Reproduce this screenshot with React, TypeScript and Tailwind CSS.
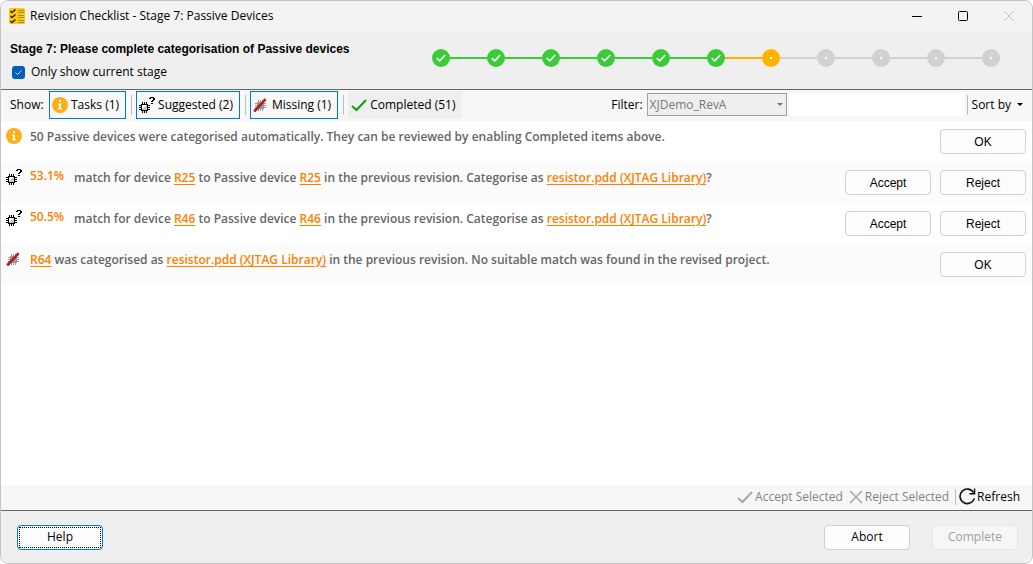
import React from 'react';

const CheckMark = ({ color, width = 2 }) => (
  <svg width="16" height="16" viewBox="0 0 16 16" fill="none" className="shrink-0" aria-hidden="true">
    <path d="M1 9 L5.5 13 L15 3" stroke={color} strokeWidth={width} />
  </svg>
);

const AppIcon = () => (
  <svg width="16" height="16" viewBox="0 0 16 16" fill="none" className="shrink-0" aria-hidden="true">
    <rect width="16" height="16" rx="1.5" fill="#ffc800" />
    <path d="M9 2.5h6M9 4.5h6M9 7.5h6M9 9.5h6M9 12.5h6M9 14.5h6" stroke="#a08c50" />
    <path d="M1.5 3 L3 4.5 L6.5 1.5M1.5 8 L3 9.5 L6.5 6.5M1.5 13 L3 14.5 L6.5 11.5" stroke="#222" strokeWidth="1.4" />
  </svg>
);

const InfoIcon = () => (
  <svg width="16" height="16" viewBox="0 0 16 16" className="shrink-0" aria-hidden="true">
    <circle cx="8" cy="8" r="8" fill="#fcaf17" />
    <path d="M7 3h2v2H7zM6 6.5h3V11h1v1.2H6V11h1V7.7H6z" fill="#fff" />
  </svg>
);

const ChipIcon = () => (
  <svg width="16" height="16" viewBox="0 0 16 16" shapeRendering="crispEdges" className="shrink-0" aria-hidden="true">
    <path d="M3 5h1v11H3zM5 5h1v11H5zM7 5h1v11H7zM0 8h11v1H0zM0 10h11v1H0zM0 12h11v1H0zM2 7h7v7H2z" fill="#000" />
    <path d="M3 8h5v5H3z" fill="#fff" />
    <path d="M7 8h1v5H3v-1h1v-1h1v-1h1V9h1z" fill="#c4c4c4" />
    <path d="M11 0h4v1h-4zM10 1h2v1h-2zM14 1h2v2h-2zM13 3h2v1h-2zM12 4h2v1h-2zM12 6h2v1h-2z" fill="#000" />
  </svg>
);

const MissingIcon = () => (
  <svg width="16" height="16" viewBox="0 0 16 16" className="shrink-0" aria-hidden="true">
    <path
      d="M5 3h1v11H5zM7 3h1v11H7zM9 3h1v11H9zM2 6h11v1H2zM2 8h11v1H2zM2 10h11v1H2zM4 5h7v7H4z"
      fill="#999"
      shapeRendering="crispEdges"
    />
    <path d="M1.5 14.5 L12.5 2.5" stroke="#333" strokeWidth="2" />
    <path d="M1 14 L12.5 2" stroke="#e01010" strokeWidth="2" />
  </svg>
);

const RefreshIcon = () => (
  <svg width="17" height="17" viewBox="0 0 18 18" fill="none" className="shrink-0" aria-hidden="true">
    <path d="M16.2 11 A7.7 7.7 0 1 1 15.5 5" stroke="#111" strokeWidth="1.7" />
    <path d="M16.5 0.5 V6 H11" stroke="#111" strokeWidth="1.5" />
  </svg>
);

const Caret = ({ className = '' }) => (
  <svg width="6" height="3" viewBox="0 0 6 3" className={className} aria-hidden="true">
    <path d="M0 0h6L3 3z" fill="currentColor" />
  </svg>
);

const Separator = () => <div className="w-px h-5 bg-[#bdbdbd]" />;

const steps = ['done', 'done', 'done', 'done', 'done', 'done', 'current', 'todo', 'todo', 'todo', 'todo'];

const stepColors = {
  done: 'bg-[#3bcb38]',
  current: 'bg-[#ffb300]',
  todo: 'bg-[#d0d1d3]',
};

const Stepper = () => (
  <ol className="flex items-center">
    {steps.map((step, i) => (
      <li key={i} className="flex items-center">
        {i > 0 && <span className={`w-[37px] h-[2px] ${stepColors[step]}`} />}
        <span className={`w-[18px] h-[18px] rounded-full flex items-center justify-center ${stepColors[step]}`}>
          {step === 'done' ? (
            <svg width="10" height="8" viewBox="0 0 10 8" fill="none" aria-hidden="true">
              <path d="M0.7 4 L3.7 6.8 L9.2 1" stroke="#fff" strokeWidth="1.6" />
            </svg>
          ) : (
            <span className="w-[2px] h-[2px] bg-white" />
          )}
        </span>
      </li>
    ))}
  </ol>
);

const FilterToggle = ({ icon, label, active = true }) => (
  <button
    type="button"
    aria-pressed={active}
    className={`h-7 mr-px flex items-center gap-[3px] pl-[2px] pr-[6px] border ${
      active ? 'border-[#0078d7] bg-[#f7f7f7]' : 'border-[#efefef] bg-[#efefef]'
    }`}
  >
    {icon}
    {label}
  </button>
);

const buttonStyles = {
  normal: 'border-[#d0d0d0] bg-[#fdfdfd]',
  focused: 'border-[#0078d7] bg-[#fdfdfd] p-px',
  disabled: 'border-[#e6e6e6] bg-[#f6f6f6] text-[#a0a0a0]',
};

const PushButton = ({ children, variant = 'normal' }) => (
  <button
    type="button"
    disabled={variant === 'disabled'}
    className={`w-[86px] h-[25px] shrink-0 rounded border ${buttonStyles[variant]}`}
  >
    {variant === 'focused' ? (
      <span className="flex h-full items-center justify-center border border-dotted border-black">{children}</span>
    ) : (
      children
    )}
  </button>
);

const ItemLink = ({ children }) => (
  <a href="#" className="text-[#ff8000] underline underline-offset-2">
    {children}
  </a>
);

const Item = ({ icon, score = '', actions, children }) => (
  <li className="h-[41px] flex items-start px-[5px] pt-2 even:bg-[#fbfbfb]">
    <div className="h-[14px] flex items-center">{icon}</div>
    {score && <span className="w-9 ml-2 leading-3 font-semibold text-[#ff8000]">{score}</span>}
    <p className="flex-1 ml-2 leading-4 font-semibold text-[#666]">{children}</p>
    <div className="flex gap-[9px] pr-px font-['Liberation_Sans']">
      {actions.map((action) => (
        <PushButton key={action}>{action}</PushButton>
      ))}
    </div>
  </li>
);

const App = () => (
  <div className="h-screen flex flex-col overflow-hidden rounded-lg border border-[#c4c4c4] bg-white font-['Open_Sans',sans-serif] text-[12px] leading-4 text-black">
    {/* Title bar */}
    <div className="h-[30px] shrink-0 flex items-center bg-[#f3f3f3] pl-2">
      <AppIcon />
      <h1 className="flex-1 ml-[5px]">Revision Checklist - Stage 7: Passive Devices</h1>
      <div className="flex">
        <button type="button" aria-label="Minimize" className="w-[46px] h-[30px] flex items-center justify-center">
          <svg width="10" height="10" viewBox="0 0 10 10" fill="none"><path d="M0 5.5h10" stroke="#000" /></svg>
        </button>
        <button type="button" aria-label="Maximize" className="w-[46px] h-[30px] flex items-center justify-center">
          <svg width="10" height="10" viewBox="0 0 10 10" fill="none"><rect x="0.5" y="0.5" width="9" height="9" rx="1" stroke="#000" /></svg>
        </button>
        <button type="button" aria-label="Close" disabled className="w-[46px] h-[30px] flex items-center justify-center">
          <svg width="10" height="10" viewBox="0 0 10 10" fill="none"><path d="M0 0l10 10M10 0L0 10" stroke="#c0c0c0" /></svg>
        </button>
      </div>
    </div>

    {/* Stage header */}
    <div className="h-[59px] shrink-0 flex justify-between bg-[#efefef] border-b border-[#666] pl-[9px] pr-8">
      <div className="pt-[10px]">
        <h2 className="font-['Liberation_Sans'] font-bold">Stage 7: Please complete categorisation of Passive devices</h2>
        <label className="mt-[7px] pl-[2px] flex items-center gap-[6px]">
          <span className="relative w-[13px] h-[13px]">
            <input type="checkbox" defaultChecked className="block appearance-none w-[13px] h-[13px] rounded-[3px] bg-[#005fb8]" />
            <svg width="13" height="13" viewBox="0 0 13 13" fill="none" className="absolute inset-0 pointer-events-none">
              <path d="M3.5 6.5 L5.5 8.5 L9.5 4.5" stroke="#cfe3f5" />
            </svg>
          </span>
          Only show current stage
        </label>
      </div>
      <div className="pt-[18px]">
        <Stepper />
      </div>
    </div>

    {/* Filter bar */}
    <div className="h-[31px] shrink-0 flex items-center bg-[#f7f7f7] px-[9px] pb-[2px]">
      <span className="w-[39px]">Show:</span>
      <div className="flex items-center gap-1">
        <FilterToggle icon={<InfoIcon />} label="Tasks (1)" />
        <Separator />
        <FilterToggle icon={<ChipIcon />} label="Suggested (2)" />
        <Separator />
        <FilterToggle icon={<MissingIcon />} label="Missing (1)" />
        <Separator />
        <FilterToggle icon={<CheckMark color="#10a010" />} label="Completed (51)" active={false} />
      </div>
      <div className="ml-auto flex items-center">
        <label htmlFor="filter" className="mr-1">Filter:</label>
        <div className="relative w-[140px] text-[#777]">
          <select
            id="filter"
            disabled
            className="block appearance-none w-full h-[23px] pl-[2px] border border-[#a0a0a0] bg-[#efefef] opacity-100"
          >
            <option>XJDemo_RevA</option>
          </select>
          <Caret className="absolute right-1 top-[10px] pointer-events-none" />
        </div>
        <input type="text" aria-label="Filter text" className="w-[175px] h-[23px] ml-[2px] mr-[3px] bg-white" />
        <Separator />
        <button type="button" className="ml-1 flex items-center gap-[6px]">
          Sort by
          <Caret />
        </button>
      </div>
    </div>

    {/* Checklist */}
    <ul className="flex-1 min-h-0">
      <Item icon={<InfoIcon />} actions={['OK']}>
        50 Passive devices were categorised automatically. They can be reviewed by enabling Completed items above.
      </Item>
      <Item icon={<ChipIcon />} score="53.1%" actions={['Accept', 'Reject']}>
        match for device <ItemLink>R25</ItemLink> to Passive device <ItemLink>R25</ItemLink> in the previous revision.
        Categorise as <ItemLink>resistor.pdd (XJTAG Library)</ItemLink>?
      </Item>
      <Item icon={<ChipIcon />} score="50.5%" actions={['Accept', 'Reject']}>
        match for device <ItemLink>R46</ItemLink> to Passive device <ItemLink>R46</ItemLink> in the previous revision.
        Categorise as <ItemLink>resistor.pdd (XJTAG Library)</ItemLink>?
      </Item>
      <Item icon={<MissingIcon />} actions={['OK']}>
        <ItemLink>R64</ItemLink> was categorised as <ItemLink>resistor.pdd (XJTAG Library)</ItemLink> in the previous
        revision. No suitable match was found in the revised project.
      </Item>
    </ul>

    {/* Selection bar */}
    <div className="h-[25px] shrink-0 flex items-center justify-end bg-[#f7f7f7] pr-3 pb-[2px] text-[#838383]">
      <button type="button" disabled className="flex items-center gap-[2px] mr-[6px]">
        <CheckMark color="#a8a8a8" />
        Accept Selected
      </button>
      <button type="button" disabled className="flex items-center gap-[2px] mr-[6px]">
        <svg width="14" height="14" viewBox="0 0 14 14" fill="none" aria-hidden="true">
          <path d="M1 1l12 12M13 1L1 13" stroke="#a8a8a8" strokeWidth="1.5" />
        </svg>
        Reject Selected
      </button>
      <div className="w-px h-4 bg-[#bdbdbd]" />
      <button type="button" className="flex items-center gap-px ml-[3px] text-black">
        <RefreshIcon />
        Refresh
      </button>
    </div>

    {/* Footer */}
    <div className="h-[53px] shrink-0 flex items-center bg-[#efefef] border-t border-[#666] pl-4 pr-[14px]">
      <PushButton variant="focused">Help</PushButton>
      <div className="ml-auto flex gap-[22px]">
        <PushButton>Abort</PushButton>
        <PushButton variant="disabled">Complete</PushButton>
      </div>
    </div>
  </div>
);

export default App;
